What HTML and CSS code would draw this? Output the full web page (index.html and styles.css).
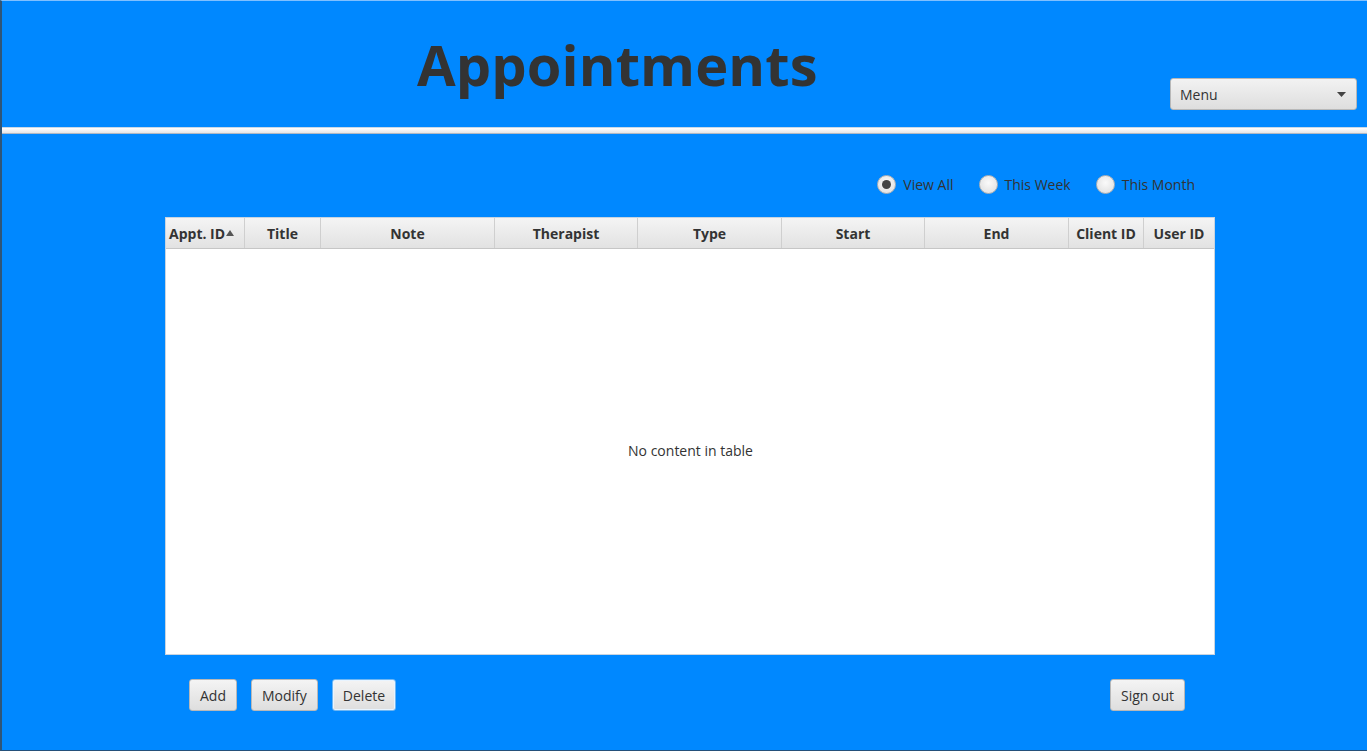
FILE: index.html
```html
<!DOCTYPE html>
<html>
<head>
<meta charset="utf-8">
<link rel="stylesheet" href="styles.css">
</head>
<body>
<div class="window">
  <header class="top">
    <h1 class="title">Appointments</h1>
    <div class="combo">
      <span>Menu</span>
      <svg class="caret" width="9" height="5" viewBox="0 0 9 5"><path d="M0 0H9L4.5 5Z" fill="#444"/></svg>
    </div>
  </header>
  <div class="sep"></div>
  <main class="content">
    <div class="radios">
      <label class="radio"><span class="dot on"></span>View All</label>
      <label class="radio"><span class="dot"></span>This Week</label>
      <label class="radio"><span class="dot"></span>This Month</label>
    </div>
    <div class="table">
      <div class="thead">
        <div class="th c1">Appt. ID<svg class="sort" width="8" height="6" viewBox="0 0 8 6"><path d="M0 6L4 0L8 6Z" fill="#555"/></svg></div>
        <div class="th c2">Title</div>
        <div class="th c3">Note</div>
        <div class="th c4">Therapist</div>
        <div class="th c5">Type</div>
        <div class="th c6">Start</div>
        <div class="th c7">End</div>
        <div class="th c8">Client ID</div>
        <div class="th c9">User ID</div>
      </div>
      <div class="tbody">No content in table</div>
    </div>
    <div class="actions">
      <div class="left">
        <button class="btn">Add</button>
        <button class="btn">Modify</button>
        <button class="btn focus">Delete</button>
      </div>
      <button class="btn">Sign out</button>
    </div>
  </main>
</div>
</body>
</html>
```
FILE: styles.css
```css
html, body {
  margin: 0;
  padding: 0;
}
body {
  width: 1367px;
  height: 751px;
  overflow: hidden;
  font-family: "Open Sans", "Noto Sans", sans-serif;
  color: #333;
}
.window {
  box-sizing: border-box;
  width: 1367px;
  height: 751px;
  background: #0088ff;
  border-left: 2px solid #2f5577;
  border-top: 1px solid #80c0ff;
  border-bottom: 1px solid #24507a;
  display: flex;
  flex-direction: column;
}
.top {
  height: 126px;
  display: flex;
  align-items: flex-start;
}
.title {
  margin: 25px 0 0 415px;
  font-size: 56px;
  font-weight: 700;
  line-height: 76px;
  color: #333;
  letter-spacing: 0.1px;
}
.combo {
  box-sizing: border-box;
  margin: 77px 0 0 auto;
  margin-right: 10px;
  width: 187px;
  height: 32px;
  border: 1px solid #b8b8b8;
  border-radius: 3px;
  background: linear-gradient(#f2f2f2, #dedede);
  display: flex;
  align-items: center;
  justify-content: space-between;
  padding: 0 10px 0 9px;
  font-size: 14px;
  color: #333;
}
.sep {
  box-sizing: border-box;
  height: 7px;
  border-top: 1px solid #c8d8e8;
  border-bottom: 1px solid #b0b8c4;
  background: linear-gradient(#ffffff, #e6e6e6);
}
.content {
  flex: 1;
  display: flex;
  flex-direction: column;
  padding-left: 163px;
}
.radios {
  width: 1030px;
  display: flex;
  justify-content: flex-end;
  gap: 25px;
  margin-top: 40px;
  height: 20px;
  align-items: center;
}
.radio {
  display: flex;
  align-items: center;
  font-size: 14px;
  color: #333;
  gap: 7px;
}
.dot {
  box-sizing: border-box;
  width: 19px;
  height: 19px;
  border-radius: 50%;
  border: 1px solid #b4b4b4;
  background: radial-gradient(circle at 50% 40%, #fafafa, #dcdcdc);
  display: flex;
  align-items: center;
  justify-content: center;
}
.dot.on::after {
  content: "";
  width: 9px;
  height: 9px;
  border-radius: 50%;
  background: #444;
}
.table {
  box-sizing: border-box;
  margin-top: 23px;
  width: 1050px;
  height: 438px;
  background: #fff;
  border: 1px solid #c8d4e0;
  display: flex;
  flex-direction: column;
}
.thead {
  display: flex;
  height: 30px;
  background: linear-gradient(#f4f4f4, #e2e2e2);
  border-bottom: 1px solid #c6c6c6;
}
.th {
  box-sizing: border-box;
  display: flex;
  align-items: center;
  justify-content: center;
  font-size: 14px;
  font-weight: 700;
  color: #333;
  border-right: 1px solid #cfcfcf;
  white-space: nowrap;
}
.c1 { width: 79px; justify-content: flex-start; padding-left: 3px; }
.c2 { width: 76px; }
.c3 { width: 174px; }
.c4 { width: 143px; }
.c5 { width: 144px; }
.c6 { width: 143px; }
.c7 { width: 144px; }
.c8 { width: 75px; }
.c9 { width: 70px; border-right: none; }
.sort { margin-left: 1px; margin-top: -1px; }
.tbody {
  flex: 1;
  display: flex;
  align-items: center;
  justify-content: center;
  font-size: 14px;
  color: #333;
  padding-left: 1px;
  padding-bottom: 2px;
}
.actions {
  width: 1050px;
  box-sizing: border-box;
  display: flex;
  justify-content: space-between;
  align-items: center;
  margin-top: 24px;
  padding: 0 30px 0 24px;
}
.left {
  display: flex;
  gap: 14px;
}
.btn {
  box-sizing: border-box;
  height: 32px;
  padding: 0 10px;
  font-family: "Open Sans", "Noto Sans", sans-serif;
  font-size: 14px;
  color: #333;
  border: 1px solid #b8b8b8;
  border-radius: 3px;
  background: linear-gradient(#f4f4f4, #dedede);
}
.btn.focus {
  border-color: #6fb6f2;
  box-shadow: inset 0 0 0 1px #e8f4ff;
}
```
